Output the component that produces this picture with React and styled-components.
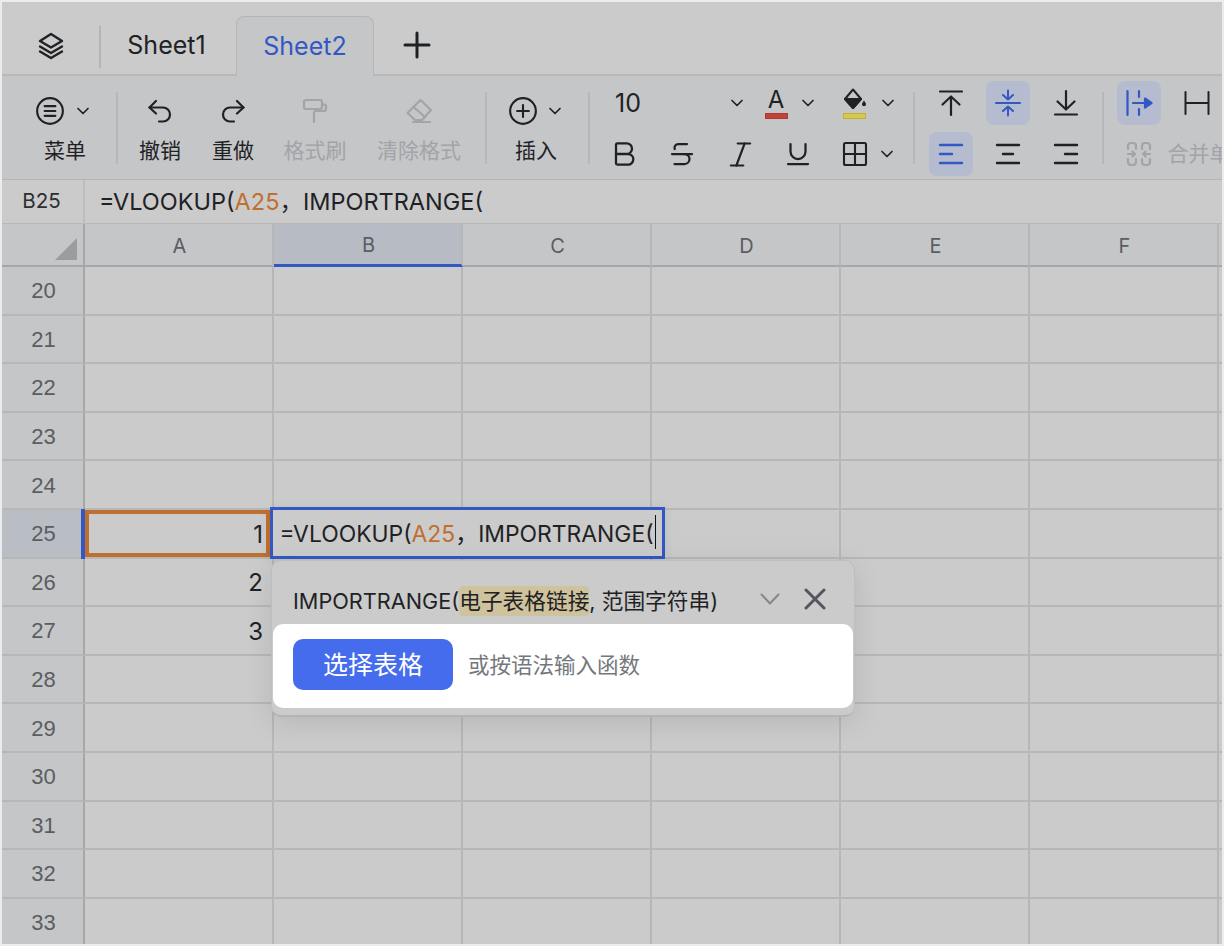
import React from 'react';
import styled, { createGlobalStyle } from 'styled-components';
import { Bold, Strikethrough, Italic, Underline } from 'lucide-react';

const INK = '#1f2225';
const BLUE = '#3358c4';
const ORANGE = '#bf6f2f';
const MUTED = '#a2a4a7';
const SANS = `Inter, "Noto Sans CJK SC", sans-serif`;

const GlobalStyle = createGlobalStyle`
  html, body { margin: 0; padding: 0; background: #ececec; }
  body { font-family: ${SANS}; color: ${INK}; }
`;

const Frame = styled.div`
  box-sizing: border-box;
  width: 1220px;
  height: 942px;
  margin: 2px;
  overflow: hidden;
  background: #cbcbcb;
`;

const TabBar = styled.div`
  display: flex;
  align-items: flex-end;
  height: 74px;
  box-sizing: border-box;
  border-bottom: 2px solid #b8b9ba;
`;

const TabIconSlot = styled.div`
  display: flex;
  align-items: center;
  justify-content: center;
  width: 97px;
  height: 60px;
  margin-bottom: -2px;
`;

const TabDivider = styled.div`
  width: 2px;
  height: 42px;
  margin: 0 0 6px 0;
  background: #b4b5b6;
`;

const Tab = styled.div`
  display: flex;
  align-items: center;
  justify-content: center;
  box-sizing: border-box;
  width: ${({ $w }) => $w}px;
  height: 60px;
  padding: 0 ${({ $active }) => ($active ? 0 : 4)}px 2px 0;
  margin-bottom: -2px;
  font-size: 25px;
  color: ${({ $active }) => ($active ? BLUE : INK)};
  background: ${({ $active }) => ($active ? '#c5c6c8' : 'transparent')};
  border: ${({ $active }) => ($active ? '1px solid #b5b6b7' : '0')};
  border-bottom: 0;
  border-radius: 8px 8px 0 0;
`;

const PlusSlot = styled.div`
  display: flex;
  align-items: center;
  justify-content: center;
  width: 86px;
  height: 58px;
`;

const Toolbar = styled.div`
  display: flex;
  align-items: center;
  height: 104px;
  box-sizing: border-box;
  padding-left: 26px;
  background: #c5c6c8;
  border-bottom: 1px solid #b4b5b6;
  overflow: hidden;
  white-space: nowrap;
`;

const ToolDivider = styled.div`
  flex: none;
  width: 2px;
  height: 72px;
  margin: 0 ${({ $r }) => $r || 0}px 0 ${({ $l }) => $l || 0}px;
  background: #b6b7b9;
`;

const ToolItem = styled.div`
  flex: none;
  display: flex;
  flex-direction: column;
  align-items: center;
  width: ${({ $w }) => $w}px;
  padding-top: 4px;
  color: ${({ $off }) => ($off ? MUTED : INK)};
`;

const ToolIconRow = styled.div`
  display: flex;
  align-items: center;
  justify-content: center;
  gap: ${({ $gap }) => $gap || 0}px;
  height: 34px;
  margin-left: ${({ $shift }) => $shift || 0}px;
`;

const ToolLabel = styled.div`
  margin-top: 8px;
  font-size: 21px;
  line-height: 30px;
`;

const ButtonGrid = styled.div`
  flex: none;
  display: grid;
  grid-template-columns: repeat(${({ $cols }) => $cols}, ${({ $cw }) => $cw}px);
  grid-auto-rows: 44px;
  row-gap: 7px;
  margin-top: 2px;
  color: ${INK};
`;

const IconButton = styled.div`
  display: flex;
  align-items: center;
  justify-content: center;
  justify-self: center;
  width: 44px;
  height: 44px;
  border-radius: 8px;
  color: ${({ $on }) => ($on ? BLUE : 'inherit')};
  background: ${({ $on }) => ($on ? '#b5bcd0' : 'transparent')};
`;

const FontPanel = styled.div`
  flex: none;
  display: flex;
  flex-direction: column;
  row-gap: 7px;
  width: 318px;
  margin-top: 2px;
  color: ${INK};
`;

const FontRow = styled.div`
  display: flex;
  align-items: center;
  height: 44px;
`;

const SizeSelect = styled.div`
  display: flex;
  align-items: center;
  justify-content: space-between;
  box-sizing: border-box;
  width: 155px;
  padding: 0 6px 0 20px;
  font-size: 25px;
`;

const ColorSelect = styled.div`
  display: flex;
  align-items: center;
  justify-content: space-between;
  box-sizing: border-box;
  width: ${({ $w }) => $w}px;
  margin-left: ${({ $ml }) => $ml || 0}px;
`;

const Swatched = styled.div`
  display: flex;
  flex-direction: column;
  align-items: center;
  width: 24px;
`;

const LetterA = styled.span`
  font-size: 24px;
  line-height: 24px;
  font-weight: 400;
`;

const Swatch = styled.div`
  width: 23px;
  height: 6px;
  margin-top: 1px;
  background: ${({ $c }) => $c};
  box-shadow: inset 0 0 0 1px rgba(0, 0, 0, 0.12);
`;

const FontCell = styled.div`
  display: flex;
  align-items: center;
  justify-content: center;
  width: 58px;
`;

const BorderCell = styled.div`
  display: flex;
  align-items: center;
  box-sizing: border-box;
  width: 53px;
  padding-left: 14px;
`;

const MergeCell = styled.div`
  display: flex;
  align-items: center;
  justify-content: center;
  height: 44px;
  width: 58px;
  color: ${MUTED};
`;

const MergeText = styled.span`
  font-size: 21px;
  color: ${MUTED};
  line-height: 44px;
`;

const FormulaBar = styled.div`
  display: flex;
  align-items: center;
  height: 44px;
  box-sizing: border-box;
  padding-bottom: 4px;
  border-bottom: 1px solid #b6b7b8;
`;

const NameBox = styled.div`
  display: flex;
  align-items: center;
  justify-content: center;
  box-sizing: border-box;
  width: 83px;
  height: 44px;
  margin-bottom: -4px;
  padding: 0 2px 3px 0;
  font-size: 20.5px;
  color: #2c2e31;
  border-right: 2px solid #bcbdbe;
`;

const FormulaText = styled.div`
  padding-left: 14px;
  font-size: 23.5px;
  white-space: nowrap;
`;

const Ref = styled.span`
  color: ${ORANGE};
`;

const Sheet = styled.div`
  position: relative;
  display: grid;
  grid-template-columns: 83px repeat(6, 189px) 1fr;
  grid-template-rows: 43px repeat(14, 48.6px);
`;

const Corner = styled.div`
  position: relative;
  background: #c5c6c8;
  border-right: 2px solid #a5a7a9;
  border-bottom: 2px solid #a5a7a9;
`;

const CornerMark = styled.div`
  position: absolute;
  right: 6px;
  bottom: 5px;
  width: 0;
  height: 0;
  border-style: solid;
  border-width: 0 0 22px 22px;
  border-color: transparent transparent #9a9c9f transparent;
`;

const ColHead = styled.div`
  display: flex;
  align-items: center;
  justify-content: center;
  box-sizing: border-box;
  padding: 2px 0 0 2px;
  font-size: 20px;
  color: #5a5d62;
  background: ${({ $on }) => ($on ? '#b7bcc4' : '#c5c6c8')};
  border-right: 2px solid #b6b7b8;
  border-bottom: ${({ $on }) => ($on ? `3.5px solid ${BLUE}` : '2px solid #a5a7a9')};
`;

const RowHead = styled.div`
  position: relative;
  display: flex;
  align-items: center;
  justify-content: center;
  box-sizing: border-box;
  padding: 2px 0 0 2px;
  font-family: "Liberation Sans", sans-serif;
  font-size: 22px;
  color: #5a5d62;
  background: ${({ $on }) => ($on ? '#b9bdc4' : '#c5c6c8')};
  border-right: 2px solid #a5a7a9;
  border-bottom: 2px solid #b6b7b8;
`;

const RowMark = styled.div`
  position: absolute;
  top: -1px;
  right: -2px;
  bottom: -2px;
  width: 4px;
  background: ${BLUE};
`;

const Cell = styled.div`
  display: flex;
  align-items: center;
  justify-content: flex-end;
  box-sizing: border-box;
  padding: 2px 9px 0 0;
  font-size: 24px;
  color: ${INK};
  border-right: 2px solid #b6b7b8;
  border-bottom: 2px solid #b6b7b8;
`;

const RefCell = styled.div`
  position: absolute;
  left: 83px;
  top: 286px;
  box-sizing: border-box;
  width: 185px;
  height: 47px;
  border: 4px solid ${ORANGE};
`;

const Editor = styled.div`
  position: absolute;
  left: 268px;
  top: 283px;
  box-sizing: border-box;
  display: flex;
  align-items: center;
  width: 395px;
  height: 52px;
  padding: 0 0 3px 6.5px;
  font-size: 22.9px;
  white-space: nowrap;
  background: #cbcbcb;
  border: 3.5px solid ${BLUE};
  box-shadow: 0 2px 10px rgba(0, 0, 0, 0.08);
`;

const Caret = styled.span`
  display: inline-block;
  width: 1px;
  height: 34px;
  margin-left: 1px;
  vertical-align: middle;
  background: #111;
`;

const Popover = styled.div`
  position: absolute;
  left: 269px;
  top: 336px;
  box-sizing: border-box;
  width: 584px;
  height: 157px;
  padding: 0 1px 8px 1px;
  background: #cbcbcb;
  border: 1px solid #bdbebf;
  border-bottom: 2px solid #b3b4b6;
  border-radius: 10px;
  box-shadow: 0 6px 28px rgba(0, 0, 0, 0.1);
`;

const PopHead = styled.div`
  display: flex;
  align-items: center;
  justify-content: space-between;
  height: 63px;
  box-sizing: border-box;
  padding: 13px 27px 0 20px;
`;

const Signature = styled.div`
  font-size: 21.7px;
  white-space: nowrap;
`;

const ArgChip = styled.span`
  padding: 2px 0;
  background: #cfc39e;
  border-radius: 4px;
`;

const PopActions = styled.div`
  display: flex;
  align-items: center;
  gap: 24px;
`;

const PopBody = styled.div`
  display: flex;
  align-items: center;
  gap: 15px;
  height: 84px;
  box-sizing: border-box;
  padding: 0 0 3px 20px;
  background: #fff;
  border-radius: 10px;
`;

const PickButton = styled.div`
  display: flex;
  align-items: center;
  justify-content: center;
  width: 160px;
  height: 51px;
  padding-bottom: 3px;
  box-sizing: border-box;
  font-size: 25px;
  color: #fff;
  background: #446cec;
  border-radius: 10px;
`;

const Hint = styled.div`
  margin-top: -3px;
  font-size: 21.5px;
  color: #74777c;
`;

const Svg = ({ size = 28, children, sw = 2.2 }) => (
  <svg
    width={size}
    height={size}
    viewBox="0 0 28 28"
    fill="none"
    stroke="currentColor"
    strokeWidth={sw}
    strokeLinecap="round"
    strokeLinejoin="round"
  >
    {children}
  </svg>
);

const Chevron = ({ size = 14 }) => (
  <svg width={size} height={size} viewBox="0 0 14 14" fill="none" stroke="currentColor" strokeWidth="1.7" strokeLinecap="round" strokeLinejoin="round">
    <path d="M2 4.5 7 9.5 12 4.5" />
  </svg>
);

const LayersIcon = () => (
  <Svg sw={2.4}>
    <path d="M14 2 25 9 14 15.5 3 9Z" />
    <path d="M3 14.5 14 21 25 14.5" />
    <path d="M3 19.5 14 26 25 19.5" />
  </Svg>
);

const PlusIcon = () => (
  <Svg sw={3}>
    <path d="M14 2V26M2 14H26" />
  </Svg>
);

const MenuIcon = () => (
  <Svg size={30} sw={2}>
    <circle cx="14" cy="14" r="12" />
    <path d="M9 9.5H19M9 14H19M9 18.5H19" />
  </Svg>
);

const UndoIcon = () => (
  <Svg>
    <path d="M10 4 3.5 10.5 10 16.5" />
    <path d="M3.5 10.5H17a7 7 0 0 1 0 14H13" />
  </Svg>
);

const RedoIcon = () => (
  <Svg>
    <path d="M18 4 24.5 10.5 18 16.5" />
    <path d="M24.5 10.5H11a7 7 0 0 0 0 14H15" />
  </Svg>
);

const BrushIcon = () => (
  <Svg>
    <rect x="3" y="3" width="18" height="9" rx="2" />
    <path d="M21 7.5h2.5a1.5 1.5 0 0 1 1.5 1.5v3a2 2 0 0 1-2 2h-8a2 2 0 0 0-2 2v9" />
  </Svg>
);

const EraserIcon = () => (
  <Svg>
    <path d="M15.5 3 26 13 17 23H10L2.5 16Z" />
    <path d="M8.5 10 20 20" />
    <path d="M8 25H25" />
  </Svg>
);

const InsertIcon = () => (
  <Svg size={30} sw={2}>
    <circle cx="14" cy="14" r="12" />
    <path d="M14 8.5V19.5M8.5 14H19.5" />
  </Svg>
);

const FillIcon = () => (
  <svg width="26" height="24" viewBox="0 0 26 24">
    <path d="M12 1.5 20 11 12 20 4 11Z" fill="none" stroke="currentColor" strokeWidth="2" strokeLinejoin="round" />
    <path d="M4 11H20L12 20Z" fill="currentColor" stroke="currentColor" strokeWidth="2" strokeLinejoin="round" />
    <path d="M23 12.5c1.2 1.8 2 2.7 2 3.8a2 2 0 0 1-4 0c0-1.1.8-2 2-3.8Z" fill="currentColor" />
  </svg>
);

const BorderIcon = () => (
  <Svg sw={2.1}>
    <rect x="3" y="3" width="22" height="22" rx="1.5" />
    <path d="M14 3V25M3 14H25" />
  </Svg>
);

const AlignTop = () => (
  <Svg>
    <path d="M3 2.5H25M14 26V8M5.5 15.5 14 7.5 22.5 15.5" />
  </Svg>
);

const AlignMiddle = () => (
  <Svg sw={2}>
    <path d="M2 14H26M14 1.5V10M9 6 14 10.5 19 6M14 26.5V18M9 22 14 17.5 19 22" />
  </Svg>
);

const AlignBottom = () => (
  <Svg>
    <path d="M3 25.5H25M14 2V20M5.5 12.5 14 20.5 22.5 12.5" />
  </Svg>
);

const TextLeft = () => (
  <Svg sw={2.4}>
    <path d="M3 5H25M3 14H15M3 23H25" />
  </Svg>
);

const TextCenter = () => (
  <Svg sw={2.4}>
    <path d="M3 5H25M9 14H19M3 23H25" />
  </Svg>
);

const TextRight = () => (
  <Svg sw={2.4}>
    <path d="M3 5H25M13 14H25M3 23H25" />
  </Svg>
);

const WrapOverflow = () => (
  <Svg sw={2.2}>
    <path d="M2.5 2V26M14 2V8M14 20V26M8 14H23" />
    <path d="M20 9.5 26.5 14 20 18.5Z" fill="currentColor" />
  </Svg>
);

const WrapClip = () => (
  <Svg sw={2}>
    <path d="M2.5 3V25M25.5 3V25M2.5 14H25.5" />
  </Svg>
);

const MergeIcon = () => (
  <Svg sw={2.2}>
    <path d="M11 9V6a3 3 0 0 0-3-3H6a3 3 0 0 0-3 3v3M17 9V6a3 3 0 0 1 3-3h2a3 3 0 0 1 3 3v3" />
    <path d="M11 19v3a3 3 0 0 1-3 3H6a3 3 0 0 1-3-3v-3M17 19v3a3 3 0 0 0 3 3h2a3 3 0 0 0 3-3v-3" />
    <path d="M3 14H10M7.5 11.5 10 14 7.5 16.5M25 14H18M20.5 11.5 18 14 20.5 16.5" />
  </Svg>
);

const COLUMNS = ['A', 'B', 'C', 'D', 'E', 'F'];
const ROWS = Array.from({ length: 14 }, (_, i) => 20 + i);
const VALUES = { 25: '1', 26: '2', 27: '3' };

const FormulaBody = () => (
  <>
    =VLOOKUP(<Ref>A25</Ref>，IMPORTRANGE(
  </>
);

const App = () => (
  <Frame>
    <GlobalStyle />
    <TabBar>
      <TabIconSlot>
        <LayersIcon />
      </TabIconSlot>
      <TabDivider />
      <Tab $w={135}>Sheet1</Tab>
      <Tab $w={138} $active>
        Sheet2
      </Tab>
      <PlusSlot>
        <PlusIcon />
      </PlusSlot>
    </TabBar>

    <Toolbar>
      <ToolItem $w={74}>
        <ToolIconRow $gap={11} $shift={-5}>
          <MenuIcon />
          <Chevron />
        </ToolIconRow>
        <ToolLabel>菜单</ToolLabel>
      </ToolItem>
      <ToolDivider $l={14} $r={6} />
      <ToolItem $w={72}>
        <ToolIconRow>
          <UndoIcon />
        </ToolIconRow>
        <ToolLabel>撤销</ToolLabel>
      </ToolItem>
      <ToolItem $w={74}>
        <ToolIconRow>
          <RedoIcon />
        </ToolIconRow>
        <ToolLabel>重做</ToolLabel>
      </ToolItem>
      <ToolItem $w={90} $off>
        <ToolIconRow>
          <BrushIcon />
        </ToolIconRow>
        <ToolLabel>格式刷</ToolLabel>
      </ToolItem>
      <ToolItem $w={118} $off>
        <ToolIconRow>
          <EraserIcon />
        </ToolIconRow>
        <ToolLabel>清除格式</ToolLabel>
      </ToolItem>
      <ToolDivider $l={7} $r={5} />
      <ToolItem $w={88}>
        <ToolIconRow $gap={10} $shift={-2}>
          <InsertIcon />
          <Chevron />
        </ToolIconRow>
        <ToolLabel>插入</ToolLabel>
      </ToolItem>
      <ToolDivider $l={8} $r={5} />

      <FontPanel>
        <FontRow>
          <SizeSelect>
            10
            <Chevron />
          </SizeSelect>
          <ColorSelect $w={51} $ml={14}>
            <Swatched>
              <LetterA>A</LetterA>
              <Swatch $c="#c2423a" />
            </Swatched>
            <Chevron />
          </ColorSelect>
          <ColorSelect $w={53} $ml={27}>
            <Swatched>
              <FillIcon />
              <Swatch $c="#d8c94a" />
            </Swatched>
            <Chevron />
          </ColorSelect>
        </FontRow>
        <FontRow>
          <FontCell>
            <Bold size={32} strokeWidth={1.7} />
          </FontCell>
          <FontCell>
            <Strikethrough size={30} strokeWidth={1.8} />
          </FontCell>
          <FontCell>
            <Italic size={33} strokeWidth={1.6} />
          </FontCell>
          <FontCell>
            <Underline size={30} strokeWidth={1.8} />
          </FontCell>
          <BorderCell>
            <BorderIcon />
          </BorderCell>
          <Chevron />
        </FontRow>
      </FontPanel>

      <ToolDivider $r={7} />
      <ButtonGrid $cols={3} $cw={57.5}>
        <IconButton>
          <AlignTop />
        </IconButton>
        <IconButton $on>
          <AlignMiddle />
        </IconButton>
        <IconButton>
          <AlignBottom />
        </IconButton>
        <IconButton $on>
          <TextLeft />
        </IconButton>
        <IconButton>
          <TextCenter />
        </IconButton>
        <IconButton>
          <TextRight />
        </IconButton>
      </ButtonGrid>
      <ToolDivider $l={7} $r={6} />
      <ButtonGrid $cols={2} $cw={58}>
        <IconButton $on>
          <WrapOverflow />
        </IconButton>
        <IconButton>
          <WrapClip />
        </IconButton>
        <MergeCell>
          <MergeIcon />
        </MergeCell>
        <MergeText>合并单元格</MergeText>
      </ButtonGrid>
    </Toolbar>

    <FormulaBar>
      <NameBox>B25</NameBox>
      <FormulaText>
        <FormulaBody />
      </FormulaText>
    </FormulaBar>

    <Sheet>
      <Corner>
        <CornerMark />
      </Corner>
      {COLUMNS.map((c) => (
        <ColHead key={c} $on={c === 'B'}>
          {c}
        </ColHead>
      ))}
      <ColHead />
      {ROWS.map((r) => (
        <React.Fragment key={r}>
          <RowHead $on={r === 25}>
            {r}
            {r === 25 && <RowMark />}
          </RowHead>
          <Cell>{VALUES[r]}</Cell>
          {COLUMNS.slice(1).map((c) => (
            <Cell key={c} />
          ))}
          <Cell />
        </React.Fragment>
      ))}

      <RefCell />
      <Editor>
        <span>
          <FormulaBody />
        </span>
        <Caret />
      </Editor>
      <Popover>
        <PopHead>
          <Signature>
            IMPORTRANGE(<ArgChip>电子表格链接</ArgChip>, 范围字符串)
          </Signature>
          <PopActions>
            <svg width="20" height="12" viewBox="0 0 20 12" fill="none" stroke="#85878b" strokeWidth="2" strokeLinecap="round" strokeLinejoin="round">
              <path d="M1.5 1.5 10 10.5 18.5 1.5" />
            </svg>
            <svg width="22" height="22" viewBox="0 0 22 22" fill="none" stroke="#53565c" strokeWidth="3" strokeLinecap="round">
              <path d="M2 2 20 20M20 2 2 20" />
            </svg>
          </PopActions>
        </PopHead>
        <PopBody>
          <PickButton>选择表格</PickButton>
          <Hint>或按语法输入函数</Hint>
        </PopBody>
      </Popover>
    </Sheet>
  </Frame>
);

export default App;
